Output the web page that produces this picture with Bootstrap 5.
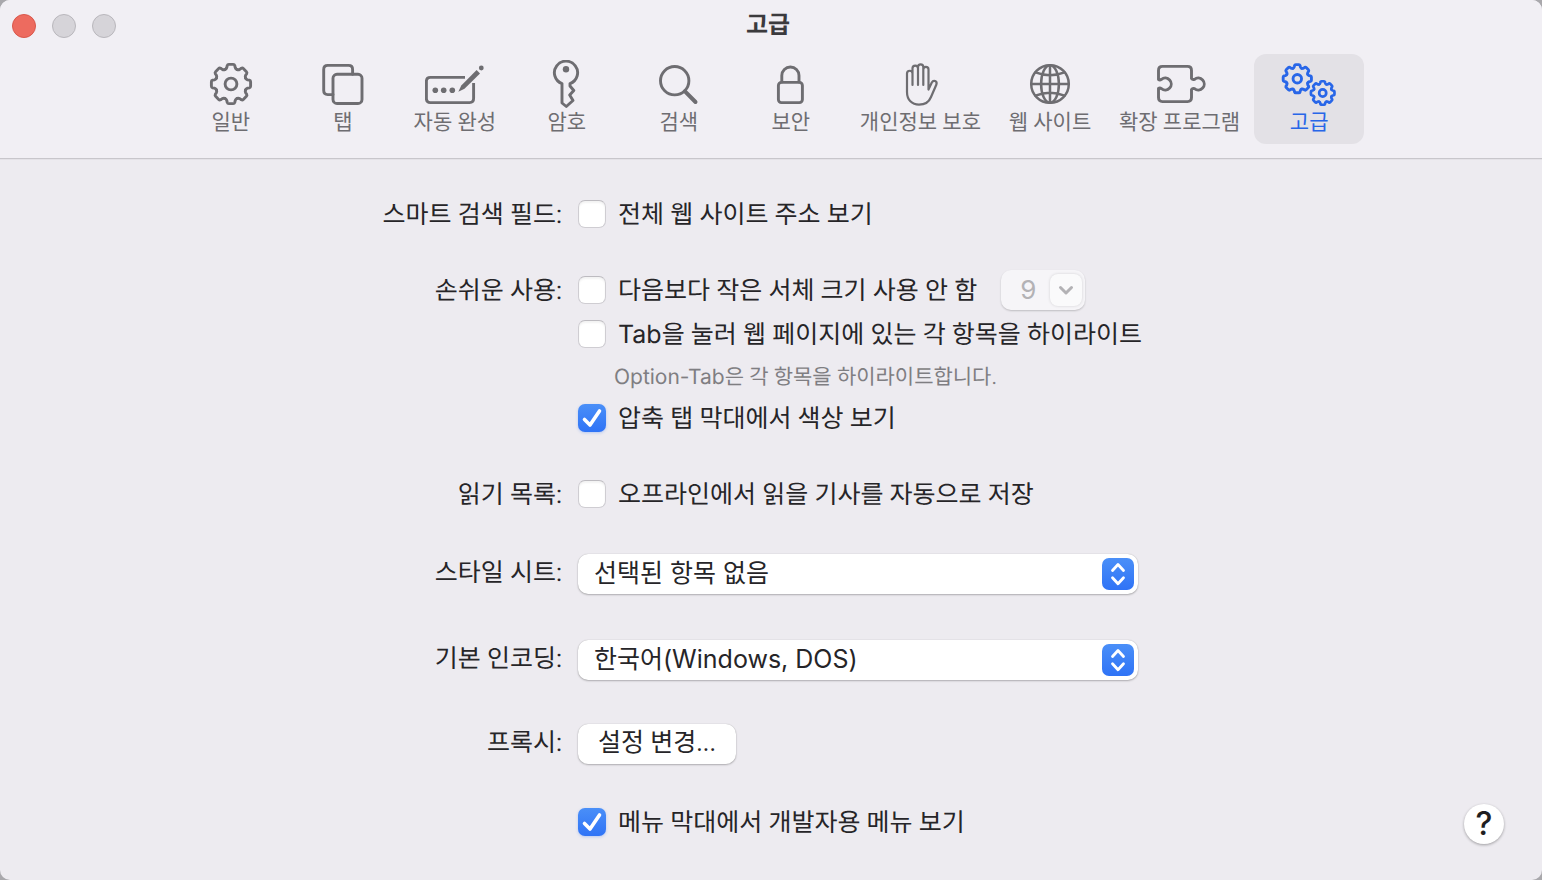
<!DOCTYPE html>
<html lang="ko">
<head>
<meta charset="utf-8">
<meta name="viewport" content="width=device-width, initial-scale=1">
<title>고급</title>
<link href="https://cdn.jsdelivr.net/npm/bootstrap@5.3.0/dist/css/bootstrap.min.css" rel="stylesheet">
<script src="https://cdn.jsdelivr.net/npm/bootstrap@5.3.0/dist/js/bootstrap.bundle.min.js"></script>
<style>
  body { background: #a9a8ac; font-family: Roboto, "Noto Sans CJK KR", sans-serif; font-size: 25px; line-height: 46px; color: #262528; text-rendering: geometricPrecision; }
  .latin { font-family: Inter, "Noto Sans CJK KR", sans-serif; }
  span.latin { line-height: 1; }
  .window { background: #edebf0; border-radius: 10px; overflow: hidden; }
  .titlebar { background: #f1eff4; border-bottom: 1px solid #c8c6cb; box-shadow: 0 1px 0 #e4e2e7; padding-bottom: 14px; }
  .title-row { display: grid; grid-template-columns: 1fr auto 1fr; height: 54px; padding: 0 18px 0 12px; }
  .title-row h1 { font-size: 24px; line-height: 50px; color: #3b3a3d; }
  .light { width: 24px; height: 24px; border-radius: 50%; border: 1px solid #b9b7bc; background: #d6d4d9; }
  .light-close { background: #ed6b5f; border-color: #d9574b; }
  .lights { gap: 16px; margin-top: 14px; }
  .tools { gap: 2px; padding-right: 2px; }
  .tool { min-width: 110px; height: 90px; padding: 6px 12px 0; border: 0; border-radius: 12px; background: none; color: #6e6d71; font-size: 21px; line-height: 28px; white-space: nowrap; }
  .tool svg { width: 60px; height: 48px; fill: none; stroke: currentColor; stroke-width: 2.9; stroke-linecap: round; stroke-linejoin: round; }
  .tool.active { background: #e3e1e6; color: #2866e8; }
  .prefs { padding: 34px 0; }
  .section { display: grid; grid-template-columns: 180px minmax(0, 582px); column-gap: 16px; justify-content: center; }
  .section + .section { margin-top: 34px; }
  .section.style-sheet { margin-top: 38px; }
  .section.encoding { margin-top: 44px; }
  .section.proxy { margin-top: 42px; }
  .section.develop { margin-top: 36px; }
  .name { text-align: right; white-space: nowrap; height: 42px; }
  .raised { line-height: 42px; }
  .check-row { gap: 12px; white-space: nowrap; height: 42px; }
  .check-row label { height: 42px; }
  .check-row .form-check-input { width: 28px; height: 28px; margin: 0; border: 1px solid #cfcdd2; border-top-color: #bdbbc0; border-radius: 7px; background-color: #fff; box-shadow: inset 0 2px 2px #0000000d; flex: none; }
  .check-row .form-check-input:checked { border: 0; background-color: #3478f6; box-shadow: 0 1px 3px #3478f64d; background-size: 28px 28px;
    background-image: url("data:image/svg+xml,%3Csvg xmlns='http://www.w3.org/2000/svg' viewBox='0 0 28 28'%3E%3Cpath d='M6.5 15.5 12 21 21.5 7' fill='none' stroke='%23fff' stroke-width='3.6' stroke-linecap='round' stroke-linejoin='round'/%3E%3C/svg%3E"), linear-gradient(#4a8ff8, #2f73f6); }
  .hint { font-size: 21px; color: #7f7e82; padding-left: 36px; height: 42px; }
  .size-box { width: 84px; height: 40px; margin-left: 12px; padding: 0 3px 0 12px; border-radius: 10px; background: #f6f5f8; box-shadow: 0 1px 2px #00000033; }
  .size-box input { width: 30px; padding: 0; border: 0; background: none; color: #b3b2b5; text-align: center; font-size: 26px; line-height: 40px; }
  .size-box button { width: 32px; height: 32px; padding: 0; border: 0; border-radius: 8px; background: #fafafb; box-shadow: 0 0 3px #00000026; }
  .lift { background-color: #fff; border: 0; border-radius: 10px; box-shadow: 0 1px 2px #00000040, 0 0 1px #00000040; color: #262528; font-size: 25px; line-height: 38px; height: 40px; margin: 1px 0; }
  .popup { width: 560px; max-width: 100%; padding: 0 44px 2px 16px; background-size: 32px 32px; background-position: right 4px center;
    background-image: url("data:image/svg+xml,%3Csvg xmlns='http://www.w3.org/2000/svg' viewBox='0 0 32 32'%3E%3ClinearGradient id='g' x2='0' y2='1'%3E%3Cstop stop-color='%234a8ff8'/%3E%3Cstop offset='1' stop-color='%232f73f6'/%3E%3C/linearGradient%3E%3Crect width='32' height='32' rx='7' fill='url(%23g)'/%3E%3Cpath d='m10.500 12.500 5.500-6 5.500 6M10.500 19.800l5.500 6 5.500-6' fill='none' stroke='%23fff' stroke-width='2.800' stroke-linecap='round' stroke-linejoin='round'/%3E%3C/svg%3E"); }
  .push { padding: 0 20px 2px; }
  .help { position: absolute; right: 38px; bottom: 36px; width: 40px; height: 40px; padding: 0; border: 0; border-radius: 50%; background: #fff; box-shadow: 0 1px 3px #00000055; color: #1f1e21; font-size: 32px; font-weight: 500; line-height: 40px; }
</style>
</head>
<body>
<svg class="d-none" aria-hidden="true">
  <defs>
    <path id="tooth" d="M-6-14.500Q-4.600-15.200-4.200-16.500L-3.800-18.400Q-3.400-19.600-2.200-19.600H2.200Q3.400-19.600 3.800-18.400L4.200-16.500Q4.600-15.200 6-14.500"/>
    <g id="gear">
      <use href="#tooth"/><use href="#tooth" transform="rotate(45)"/><use href="#tooth" transform="rotate(90)"/><use href="#tooth" transform="rotate(135)"/>
      <use href="#tooth" transform="rotate(180)"/><use href="#tooth" transform="rotate(225)"/><use href="#tooth" transform="rotate(270)"/><use href="#tooth" transform="rotate(315)"/>
      <circle r="5.900"/>
    </g>
  </defs>
</svg>
<div class="window position-relative min-vh-100">
  <header class="titlebar">
    <div class="title-row">
      <div class="lights d-flex">
        <button type="button" class="light light-close p-0" aria-label="닫기"></button>
        <button type="button" class="light p-0" aria-label="최소화" disabled></button>
        <button type="button" class="light p-0" aria-label="확대" disabled></button>
      </div>
      <h1 class="m-0 fw-bold">고급</h1>
    </div>
    <nav class="tools d-flex justify-content-center" aria-label="설정">
      <button type="button" class="tool d-flex flex-column align-items-center">
        <svg viewBox="0 0 60 48"><use href="#gear" x="30" y="24"/></svg>일반</button>
      <button type="button" class="tool d-flex flex-column align-items-center">
        <svg viewBox="0 0 60 48"><rect x="20" y="14.300" width="29" height="29.200" rx="4"/><path d="M20 34.600H14.700Q10.700 34.600 10.700 30.600V9.400Q10.700 5.400 14.700 5.400H35.600Q39.600 5.400 39.600 9.400V14.300"/></svg>탭</button>
      <button type="button" class="tool d-flex flex-column align-items-center">
        <svg viewBox="0 0 60 48"><path stroke-linecap="butt" d="M40 17.400H5.400Q1.400 17.400 1.400 21.400V38.600Q1.400 42.600 5.400 42.600H44.600Q48.600 42.600 48.600 38.600V23"/><g fill="currentColor" stroke="none"><circle cx="10.300" cy="30.300" r="2.800"/><circle cx="18.700" cy="30.300" r="2.800"/><circle cx="27.300" cy="30.300" r="2.800"/><circle cx="56.300" cy="8" r="2.400"/><path d="M51.600 10 55 13.400 39.500 28.700 33.300 31.700 36.300 25.500Z"/></g></svg>자동 완성</button>
      <button type="button" class="tool d-flex flex-column align-items-center">
        <svg viewBox="0 0 60 48"><path d="M33 23.600A11.600 11.600 0 1 0 25 23.600V43L29.300 46.500 36 40.500 32.700 35 36.800 30.500 33 26Z"/><circle cx="29" cy="9.300" r="3.200" fill="currentColor" stroke="none"/></svg>암호</button>
      <button type="button" class="tool d-flex flex-column align-items-center">
        <svg viewBox="0 0 60 48"><circle cx="25.700" cy="20.700" r="14.200"/><path stroke-width="4" d="M36 31.300 46.500 42"/></svg>검색</button>
      <button type="button" class="tool d-flex flex-column align-items-center">
        <svg viewBox="0 0 60 48"><rect x="17.400" y="22.400" width="24" height="20.200" rx="3"/><path d="M20.800 22V15.600a8.600 8.600 0 0 1 17.200 0V22"/></svg>보안</button>
      <button type="button" class="tool d-flex flex-column align-items-center">
        <svg viewBox="0 0 60 48"><path stroke-width="2.200" d="M22.500 25V13.500a2.750 2.750 0 0 0-5.500 0V32C17 40 22 44.700 29 44.700 35 44.700 39 42 41 37L46.400 24.500C47.500 21 43.500 19.500 41.800 22.500L38.500 29.500V9.500a2.600 2.600 0 0 0-5.200 0V25M33.300 10V7a2.650 2.650 0 0 0-5.300 0V25M28 10V8.300a2.750 2.750 0 0 0-5.500 0V14"/></svg>개인정보 보호</button>
      <button type="button" class="tool d-flex flex-column align-items-center">
        <svg viewBox="0 0 60 48"><g stroke-width="2.500"><circle cx="30" cy="24" r="18.800"/><ellipse cx="30" cy="24" rx="8.900" ry="18.800"/><path d="M30 5.200V42.800M11.200 24H48.800M15.500 12.300Q30 18 44.500 12.300M15.500 35.700Q30 30 44.500 35.700"/></g></svg>웹 사이트</button>
      <button type="button" class="tool d-flex flex-column align-items-center">
        <svg viewBox="0 0 60 48"><path d="M8.500 19.500V10.400q0-4 4-4H37.500q4 0 4 4V18.500q1 1.500 3 .8A6 6 0 1 1 44.500 28.700q-2-.7-3 .8V37.600q0 4-4 4H12.500q-4 0-4-4V28.500q1.300-1 3 .2A6 6 0 1 0 11.500 19.300q-1.700 1.200-3 .2"/></svg>확장 프로그램</button>
      <button type="button" class="tool active d-flex flex-column align-items-center" aria-current="page">
        <svg viewBox="0 0 60 48"><g stroke-width="4" transform="translate(18.300 18.700) scale(.72)"><use href="#gear"/></g><g stroke-width="4.500" transform="translate(43.700 33) scale(.6)"><use href="#gear"/></g></svg>고급</button>
    </nav>
  </header>

  <main>
    <form class="prefs">
      <div class="section">
        <div class="name">스마트 검색 필드:</div>
        <div class="check-row d-flex align-items-center">
          <input class="form-check-input" type="checkbox" id="fullAddress"><label for="fullAddress">전체 웹 사이트 주소 보기</label>
        </div>
      </div>
      <div class="section">
        <div class="name">손쉬운 사용:</div>
        <div>
          <div class="check-row d-flex align-items-center">
            <input class="form-check-input" type="checkbox" id="minFont"><label for="minFont">다음보다 작은 서체 크기 사용 안 함</label>
            <div class="size-box d-flex align-items-center justify-content-between">
              <input class="latin" type="text" value="9" aria-label="서체 크기" disabled>
              <button type="button" class="d-flex align-items-center justify-content-center" aria-label="크기 선택" disabled><svg width="16" height="16" viewBox="0 0 16 16" fill="none" stroke="#b3b2b5" stroke-width="3" stroke-linecap="round" stroke-linejoin="round"><path d="M2.500 5.500 8 11 13.500 5.500"/></svg></button>
            </div>
          </div>
          <div class="check-row d-flex align-items-center" style="margin-top:2px">
            <input class="form-check-input" type="checkbox" id="tabKey"><label for="tabKey"><span class="latin">Tab</span>을 눌러 웹 페이지에 있는 각 항목을 하이라이트</label>
          </div>
          <div class="hint"><span class="latin">Option-Tab</span>은 각 항목을 하이라이트합니다.</div>
          <div class="check-row d-flex align-items-center">
            <input class="form-check-input" type="checkbox" id="tabColor" checked><label for="tabColor">압축 탭 막대에서 색상 보기</label>
          </div>
        </div>
      </div>
      <div class="section">
        <div class="name">읽기 목록:</div>
        <div class="check-row d-flex align-items-center">
          <input class="form-check-input" type="checkbox" id="offline"><label for="offline">오프라인에서 읽을 기사를 자동으로 저장</label>
        </div>
      </div>
      <div class="section style-sheet">
        <label class="name raised" for="sheet">스타일 시트:</label>
        <select class="form-select lift popup latin" id="sheet"><option>선택된 항목 없음</option></select>
      </div>
      <div class="section encoding">
        <label class="name raised" for="enc">기본 인코딩:</label>
        <select class="form-select lift popup latin" id="enc"><option>한국어(Windows, DOS)</option></select>
      </div>
      <div class="section proxy">
        <label class="name raised" for="proxy">프록시:</label>
        <div class="d-flex"><button type="button" class="btn lift push" id="proxy">설정 변경...</button></div>
      </div>
      <div class="section develop">
        <div></div>
        <div class="check-row d-flex align-items-center">
          <input class="form-check-input" type="checkbox" id="develop" checked><label for="develop">메뉴 막대에서 개발자용 메뉴 보기</label>
        </div>
      </div>
    </form>
  </main>
  <button type="button" class="help latin" aria-label="도움말">?</button>
</div>
</body>
</html>
